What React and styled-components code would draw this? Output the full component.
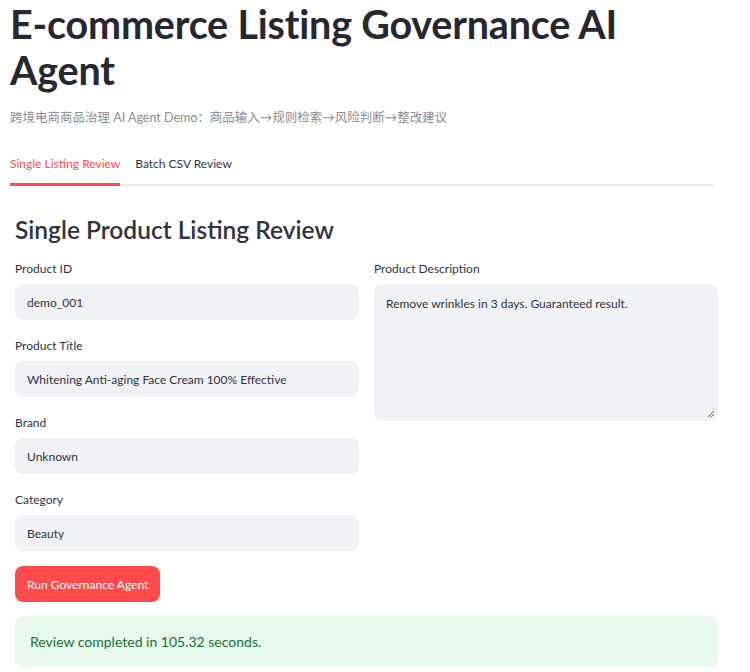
import React from 'react'
import styled, { createGlobalStyle } from 'styled-components'

const GlobalStyle = createGlobalStyle`
  body {
    margin: 0;
    background: #ffffff;
    font-family: Lato, "Noto Sans CJK SC", sans-serif;
    color: #31333f;
  }
`

const Page = styled.div`
  width: 750px;
  height: 672px;
  overflow: hidden;
  padding: 0 10px;
  box-sizing: border-box;
`

const Title = styled.h1`
  margin: 0;
  padding-top: 1px;
  font-size: 39.5px;
  line-height: 46px;
  font-weight: 700;
  color: #262730;
  letter-spacing: -0.2px;
  width: 640px;
`

const Caption = styled.p`
  margin: 15px 0 0;
  font-size: 12.5px;
  line-height: 20px;
  color: #8a8c93;
  font-family: Lato, "Noto Sans CJK SC", sans-serif;
`

const TabBar = styled.div`
  display: flex;
  gap: 15px;
  margin-top: 27px;
  width: 703px;
  border-bottom: 2px solid #eaeaec;
`

const Tab = styled.div`
  font-size: 12px;
  line-height: 18px;
  padding-bottom: 10px;
  margin-bottom: -2px;
  color: ${p => (p.active ? '#ff4b4b' : '#31333f')};
  border-bottom: 3px solid ${p => (p.active ? '#ff4b4b' : 'transparent')};
`

const Section = styled.div`
  padding: 0 5px;
  width: 703px;
`

const Heading = styled.h2`
  margin: 27px 0 0;
  font-size: 24.5px;
  line-height: 34px;
  font-weight: 600;
  color: #31333f;
`

const Columns = styled.div`
  display: grid;
  grid-template-columns: 1fr 1fr;
  gap: 15px;
  margin-top: 14px;
`

const Column = styled.div`
  display: flex;
  flex-direction: column;
  gap: 18px;
`

const Field = styled.div`
  display: flex;
  flex-direction: column;
`

const Label = styled.label`
  font-size: 12px;
  line-height: 16px;
  color: #31333f;
  margin-bottom: 7px;
`

const Input = styled.div`
  height: 36px;
  border-radius: 8px;
  background: #f0f2f6;
  padding: 0 12px;
  display: flex;
  align-items: center;
  font-size: 12px;
  color: #31333f;
`

const TextArea = styled.div`
  position: relative;
  height: 137px;
  border-radius: 8px;
  background: #f0f2f6;
  padding: 12px;
  box-sizing: border-box;
  font-size: 12px;
  line-height: 16px;
  color: #31333f;
`

const Grip = styled.svg`
  position: absolute;
  right: 3px;
  bottom: 3px;
`

const Button = styled.button`
  margin-top: 15px;
  height: 36px;
  padding: 0 12px;
  border: none;
  border-radius: 8px;
  background: #ff4b4b;
  color: #ffffff;
  font-family: Lato, sans-serif;
  font-size: 12px;
  cursor: pointer;
`

const Success = styled.div`
  margin-top: 14px;
  height: 51px;
  border-radius: 8px;
  background: #e8f9ee;
  color: #177233;
  font-size: 14px;
  display: flex;
  align-items: center;
  padding: 0 15px;
`

const fields = [
  { label: 'Product ID', value: 'demo_001' },
  { label: 'Product Title', value: 'Whitening Anti-aging Face Cream 100% Effective' },
  { label: 'Brand', value: 'Unknown' },
  { label: 'Category', value: 'Beauty' },
]

export default function App() {
  return (
    <Page>
      <GlobalStyle />
      <Title>E-commerce Listing Governance AI Agent</Title>
      <Caption>跨境电商商品治理 AI Agent Demo：商品输入→规则检索→风险判断→整改建议</Caption>
      <TabBar>
        <Tab active>Single Listing Review</Tab>
        <Tab>Batch CSV Review</Tab>
      </TabBar>
      <Section>
        <Heading>Single Product Listing Review</Heading>
        <Columns>
          <Column>
            {fields.map(f => (
              <Field key={f.label}>
                <Label>{f.label}</Label>
                <Input>{f.value}</Input>
              </Field>
            ))}
          </Column>
          <Column>
            <Field>
              <Label>Product Description</Label>
              <TextArea>
                Remove wrinkles in 3 days. Guaranteed result.
                <Grip width="8" height="8" viewBox="0 0 8 8">
                  <path d="M7 1L1 7M7 4L4 7" stroke="#6b6d75" strokeWidth="1" />
                </Grip>
              </TextArea>
            </Field>
          </Column>
        </Columns>
        <Button>Run Governance Agent</Button>
        <Success>Review completed in 105.32 seconds.</Success>
      </Section>
    </Page>
  )
}
